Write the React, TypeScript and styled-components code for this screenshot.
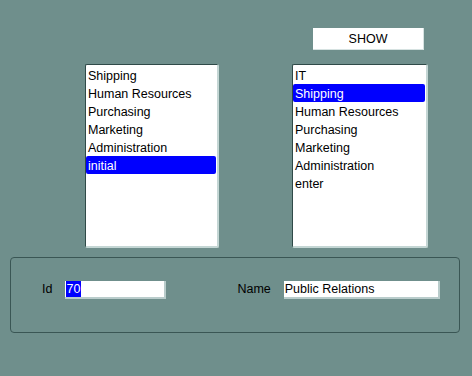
import React from "react";
import styled, { createGlobalStyle } from "styled-components";

const GlobalStyle = createGlobalStyle`
  html, body {
    margin: 0;
    padding: 0;
    background: #6f8f8c;
  }
  body {
    font-family: "Liberation Sans", Arial, sans-serif;
    font-size: 12.5px;
    color: #000;
  }
`;

const Page = styled.div`
  width: 472px;
  height: 376px;
  box-sizing: border-box;
  padding-top: 28px;
  display: flex;
  flex-direction: column;
  background: #6f8f8c;
`;

const Toolbar = styled.div`
  display: flex;
  padding-left: 313px;
`;

const ShowButton = styled.button`
  width: 111px;
  height: 22px;
  padding: 0;
  background: #fff;
  border: none;
  border-right: 1px solid #d6e2e1;
  border-bottom: 1px solid #d6e2e1;
  font-family: "Liberation Sans", Arial, sans-serif;
  font-size: 12.5px;
  color: #000;
  cursor: pointer;
`;

const ListsRow = styled.div`
  display: flex;
  gap: 73px;
  margin-top: 14px;
  padding-left: 85px;
`;

const ListBox = styled.ul<{ $width: number }>`
  width: ${(p) => p.$width}px;
  height: 184px;
  box-sizing: border-box;
  margin: 0;
  padding: 1px 1px 0 0;
  list-style: none;
  background: #fff;
  border-top: 1px solid #2f4a48;
  border-left: 1px solid #2f4a48;
  border-right: 2px solid #c4d6d4;
  border-bottom: 2px solid #c4d6d4;
  border-radius: 2px;
  overflow: hidden;
`;

const ListItem = styled.li<{ $selected?: boolean }>`
  height: 18px;
  line-height: 20px;
  padding-left: 2px;
  white-space: nowrap;
  background: ${(p) => (p.$selected ? "#0000ff" : "transparent")};
  color: ${(p) => (p.$selected ? "#fff" : "#000")};
  border-radius: ${(p) => (p.$selected ? "2px" : "0")};
`;

const GroupBox = styled.div`
  margin: 9px 0 0 10px;
  width: 450px;
  height: 76px;
  box-sizing: border-box;
  border: 1px solid #3a5654;
  border-radius: 4px;
  display: flex;
  align-items: flex-start;
  padding: 23px 0 0 31px;
`;

const FieldLabel = styled.span<{ $gap: number }>`
  line-height: 17px;
  margin-right: ${(p) => p.$gap}px;
`;

const TextField = styled.div<{ $width: number; $after?: number }>`
  width: ${(p) => p.$width}px;
  height: 18px;
  box-sizing: border-box;
  background: #fff;
  border-right: 2px solid #b9cccb;
  border-bottom: 2px solid #b9cccb;
  padding-left: 1px;
  line-height: 17px;
  margin-right: ${(p) => p.$after ?? 0}px;
  white-space: nowrap;
  overflow: hidden;
`;

const Selected = styled.span`
  background: #0000ff;
  color: #fff;
  display: inline-block;
  line-height: 16px;
  padding-right: 1px;
`;

const leftItems = ["Shipping", "Human Resources", "Purchasing", "Marketing", "Administration", "initial"];
const rightItems = ["IT", "Shipping", "Human Resources", "Purchasing", "Marketing", "Administration", "enter"];

export default function App() {
  return (
    <>
      <GlobalStyle />
      <Page>
        <Toolbar>
          <ShowButton>SHOW</ShowButton>
        </Toolbar>
        <ListsRow>
          <ListBox $width={134}>
            {leftItems.map((item, index) => (
              <ListItem key={index} $selected={item === "initial"}>
                {item}
              </ListItem>
            ))}
          </ListBox>
          <ListBox $width={136}>
            {rightItems.map((item, index) => (
              <ListItem key={index} $selected={index === 1}>
                {item}
              </ListItem>
            ))}
          </ListBox>
        </ListsRow>
        <GroupBox>
          <FieldLabel $gap={13}>Id</FieldLabel>
          <TextField $width={101} $after={71}>
            <Selected>70</Selected>
          </TextField>
          <FieldLabel $gap={13}>Name</FieldLabel>
          <TextField $width={156}>Public Relations</TextField>
        </GroupBox>
      </Page>
    </>
  );
}
